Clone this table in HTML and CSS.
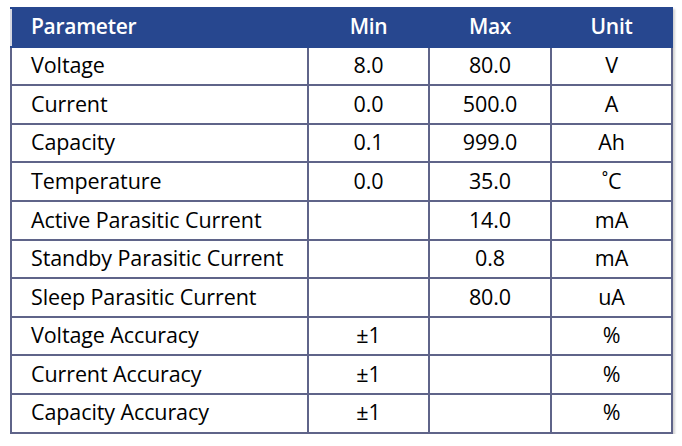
FILE: index.html
```html
<!DOCTYPE html>
<html>
<head>
<meta charset="utf-8">
<link rel="stylesheet" href="styles.css">
</head>
<body>
<table class="spec">
  <colgroup>
    <col class="c-param"><col class="c-min"><col class="c-max"><col class="c-unit">
  </colgroup>
  <thead>
    <tr><th class="left">Parameter</th><th>Min</th><th>Max</th><th>Unit</th></tr>
  </thead>
  <tbody>
    <tr><td class="left">Voltage</td><td>8.0</td><td>80.0</td><td>V</td></tr>
    <tr><td class="left">Current</td><td>0.0</td><td>500.0</td><td>A</td></tr>
    <tr><td class="left">Capacity</td><td>0.1</td><td>999.0</td><td>Ah</td></tr>
    <tr><td class="left">Temperature</td><td>0.0</td><td>35.0</td><td>˚C</td></tr>
    <tr><td class="left">Active Parasitic Current</td><td></td><td>14.0</td><td>mA</td></tr>
    <tr><td class="left">Standby Parasitic Current</td><td></td><td>0.8</td><td>mA</td></tr>
    <tr><td class="left">Sleep Parasitic Current</td><td></td><td>80.0</td><td>uA</td></tr>
    <tr><td class="left">Voltage Accuracy</td><td>±1</td><td></td><td>%</td></tr>
    <tr><td class="left">Current Accuracy</td><td>±1</td><td></td><td>%</td></tr>
    <tr><td class="left">Capacity Accuracy</td><td>±1</td><td></td><td>%</td></tr>
  </tbody>
</table>
</body>
</html>
```
FILE: styles.css
```css
html, body {
  margin: 0;
  padding: 0;
  background: #ffffff;
}
body {
  padding: 7px 0 0 10px;
  font-family: "Open Sans", "Noto Sans", sans-serif;
}
.spec {
  border-collapse: collapse;
  table-layout: fixed;
  width: 661px;
  box-shadow: 2px 2px 2px rgba(0,0,0,0.18);
}
.c-param { width: 297px; }
.c-min { width: 121px; }
.c-max { width: 122px; }
.c-unit { width: 121px; }
.spec th {
  background: #27478f;
  color: #ffffff;
  font-weight: 600;
  font-size: 21px;
  letter-spacing: -0.3px;
  height: 35.6px;
  line-height: 1;
  padding: 0 0 1px 0;
  text-align: center;
  border: 2px solid #27478f;
  border-left-color: #d6d8e2;
}
.spec td {
  height: 34.6px;
  line-height: 1;
  padding: 0 0 2px 0;
  font-size: 21.5px;
  letter-spacing: -0.1px;
  color: #000000;
  text-align: center;
  border: 2px solid #5f6489;
}
.spec .left {
  text-align: left;
  padding-left: 19px;
}
```
